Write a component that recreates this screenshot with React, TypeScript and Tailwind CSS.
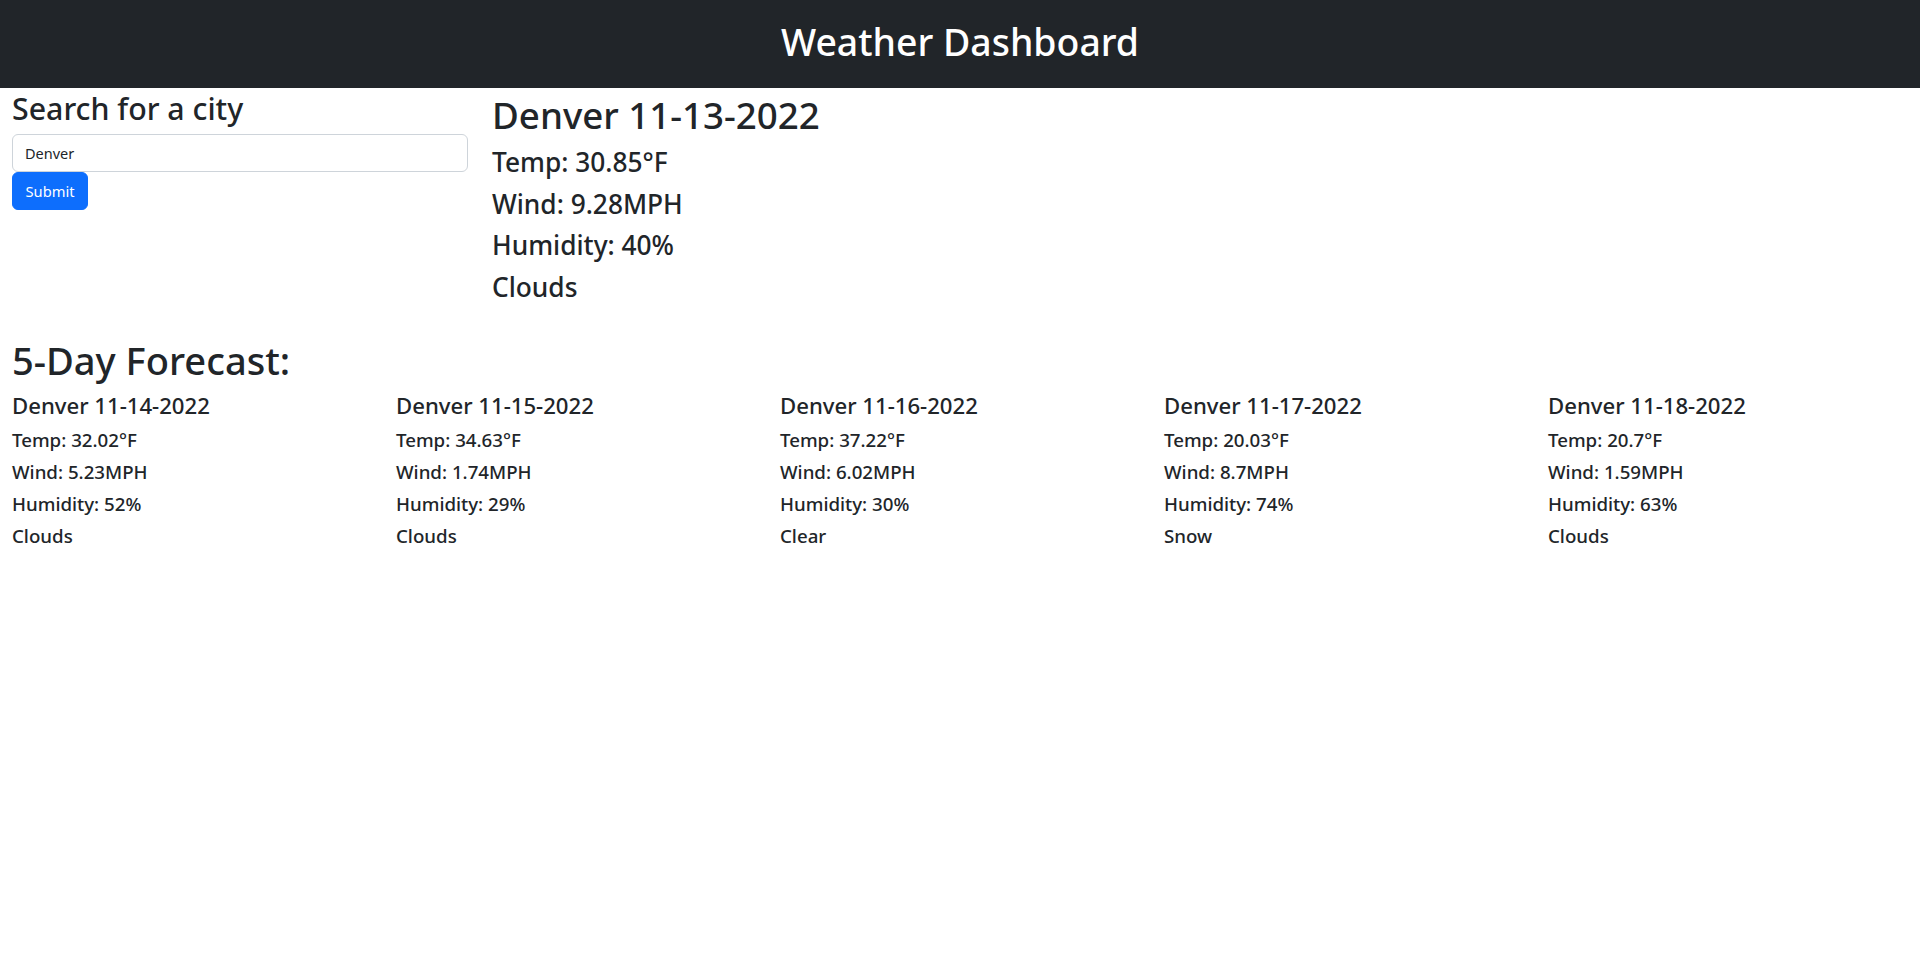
type Day = {
  date: string;
  temp: string;
  wind: string;
  humidity: string;
  sky: string;
};

const current: Day = {
  date: "11-13-2022",
  temp: "30.85",
  wind: "9.28",
  humidity: "40",
  sky: "Clouds",
};

const forecast: Day[] = [
  { date: "11-14-2022", temp: "32.02", wind: "5.23", humidity: "52", sky: "Clouds" },
  { date: "11-15-2022", temp: "34.63", wind: "1.74", humidity: "29", sky: "Clouds" },
  { date: "11-16-2022", temp: "37.22", wind: "6.02", humidity: "30", sky: "Clear" },
  { date: "11-17-2022", temp: "20.03", wind: "8.7", humidity: "74", sky: "Snow" },
  { date: "11-18-2022", temp: "20.7", wind: "1.59", humidity: "63", sky: "Clouds" },
];

const city = "Denver";

export default function App() {
  return (
    <div className="min-h-screen bg-white font-['Noto_Sans',sans-serif] text-[#212529]">
      <header className="bg-[#212529] py-4 text-center">
        <h1 className="mb-[6px] pt-[2px] text-[37.4px] leading-[48px] font-medium text-white">Weather Dashboard</h1>
      </header>

      <main className="px-3">
        <div className="flex gap-6">
          <div className="w-[456px] shrink-0">
            <h2 className="mb-[6px] pt-[2px] text-[30.3px] leading-[38.4px] font-medium">Search for a city</h2>
            <form onSubmit={(e) => e.preventDefault()}>
              <input
                defaultValue={city}
                className="block h-[38px] w-full rounded-[6px] border border-[#ced4da] px-3 text-[14.5px] text-[#212529] outline-none"
              />
              <button
                type="submit"
                className="h-[38px] w-[76px] rounded-[6px] border border-[#0d6efd] bg-[#0d6efd] text-[14.7px] text-white"
              >
                Submit
              </button>
            </form>
          </div>

          <div className="flex-1">
            <h1 className="mb-[5px] pt-[3px] text-[36.7px] leading-[48px] font-medium">
              {city} {current.date}
            </h1>
            <h3 className="mb-[6px] pt-[2px] text-[26.3px] leading-[33.6px] font-medium">Temp: {current.temp}°F</h3>
            <h3 className="mb-[6px] pt-[2px] text-[26.3px] leading-[33.6px] font-medium">Wind: {current.wind}MPH</h3>
            <h3 className="mb-[6px] pt-[2px] text-[26.3px] leading-[33.6px] font-medium">Humidity: {current.humidity}%</h3>
            <h3 className="mb-[6px] pt-[2px] text-[26.3px] leading-[33.6px] font-medium">{current.sky}</h3>
          </div>
        </div>

        <section className="mt-[23px]">
          <h1 className="mb-[5px] pt-[3px] text-[38.1px] leading-[48px] font-medium">5-Day Forecast:</h1>
          <div className="grid grid-cols-5 gap-6">
            {forecast.map((d) => (
              <div key={d.date}>
                <h4 className="mb-[6px] pt-[2px] text-[22.15px] leading-[28.8px] font-medium">
                  {city} {d.date}
                </h4>
                <h5 className="mb-[6px] pt-[2px] text-[18.7px] leading-[24px] font-medium">Temp: {d.temp}°F</h5>
                <h5 className="mb-[6px] pt-[2px] text-[18.7px] leading-[24px] font-medium">Wind: {d.wind}MPH</h5>
                <h5 className="mb-[6px] pt-[2px] text-[18.7px] leading-[24px] font-medium">Humidity: {d.humidity}%</h5>
                <h5 className="mb-[6px] pt-[2px] text-[18.7px] leading-[24px] font-medium">{d.sky}</h5>
              </div>
            ))}
          </div>
        </section>
      </main>
    </div>
  );
}
